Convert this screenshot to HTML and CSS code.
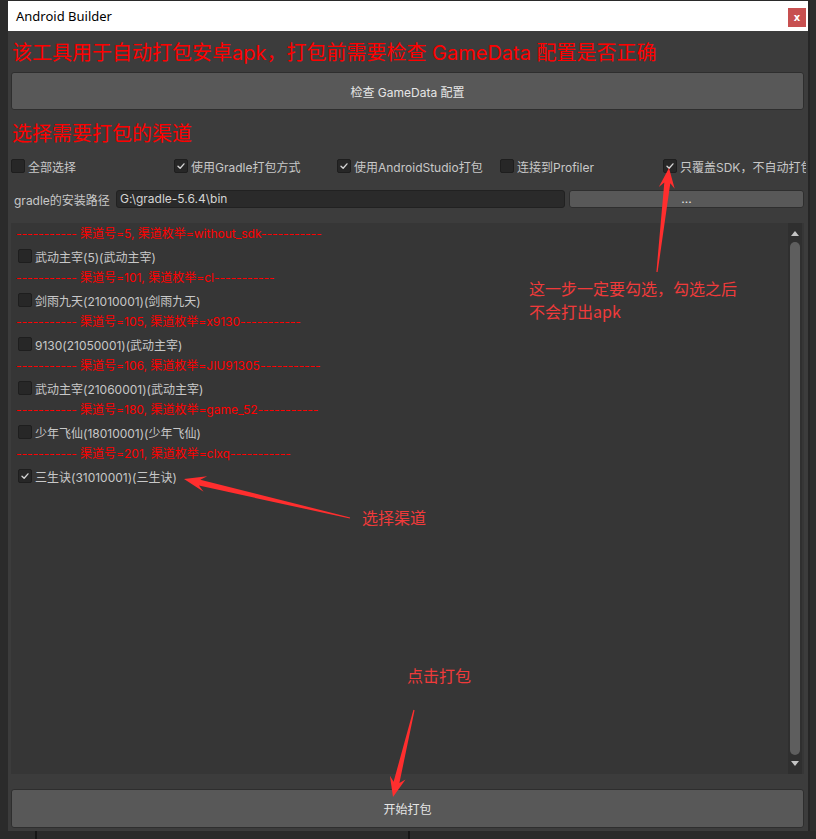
FILE: index.html
```html
<!DOCTYPE html>
<html>
<head>
<meta charset="utf-8">
<title>Android Builder</title>
<link rel="stylesheet" href="styles.css">
</head>
<body>
<div class="screen">
  <div class="gutter-l"></div>
  <div class="window">
    <div class="titlebar">
      <span class="title">Android Builder</span>
      <span class="close">x</span>
    </div>
    <div class="content">
      <div class="h1">该工具用于自动打包安卓apk，打包前需要检查 GameData 配置是否正确</div>
      <div class="btn btn-check">检查 GameData 配置</div>
      <div class="h2">选择需要打包的渠道</div>
      <div class="options">
        <div class="opt"><span class="cb"></span>全部选择</div>
        <div class="opt"><span class="cb on"><svg viewBox="0 0 14 14"><polyline points="3.5,7.2 6,9.6 10.5,4.5"/></svg></span>使用Gradle打包方式</div>
        <div class="opt"><span class="cb on"><svg viewBox="0 0 14 14"><polyline points="3.5,7.2 6,9.6 10.5,4.5"/></svg></span>使用AndroidStudio打包</div>
        <div class="opt"><span class="cb"></span>连接到Profiler</div>
        <div class="opt"><span class="cb on"><svg viewBox="0 0 14 14"><polyline points="3.5,7.2 6,9.6 10.5,4.5"/></svg></span>只覆盖SDK，不自动打包</div>
      </div>
      <div class="gradle-row">
        <span class="glabel">gradle的安装路径</span>
        <div class="field">G:\gradle-5.6.4\bin</div>
        <div class="btn btn-browse">...</div>
      </div>
      <div class="list">
        <div class="rows">
          <div class="sep">----------- 渠道号=5, 渠道枚举=without_sdk-----------</div>
          <div class="item"><span class="cb"></span>武动主宰(5)(武动主宰)</div>
          <div class="sep">----------- 渠道号=101, 渠道枚举=cl-----------</div>
          <div class="item"><span class="cb"></span>剑雨九天(21010001)(剑雨九天)</div>
          <div class="sep">----------- 渠道号=105, 渠道枚举=x9130-----------</div>
          <div class="item"><span class="cb"></span>9130(21050001)(武动主宰)</div>
          <div class="sep">----------- 渠道号=106, 渠道枚举=JIU91305-----------</div>
          <div class="item"><span class="cb"></span>武动主宰(21060001)(武动主宰)</div>
          <div class="sep">----------- 渠道号=180, 渠道枚举=game_52-----------</div>
          <div class="item"><span class="cb"></span>少年飞仙(18010001)(少年飞仙)</div>
          <div class="sep">----------- 渠道号=201, 渠道枚举=clxq-----------</div>
          <div class="item"><span class="cb on"><svg viewBox="0 0 14 14"><polyline points="3.5,7.2 6,9.6 10.5,4.5"/></svg></span>三生诀(31010001)(三生诀)</div>
        </div>
        <div class="scrollbar">
          <span class="arrow-up"></span>
          <span class="thumb"></span>
          <span class="arrow-down"></span>
        </div>
      </div>
      <div class="btn btn-build">开始打包</div>
    </div>
  </div>
  <div class="gutter-r"></div>
</div>
<div class="footer">
  <div class="f1"></div>
  <div class="f2"></div>
  <div class="f3"></div>
</div>

<div class="annotations">
  <svg class="arrows" width="816" height="839" viewBox="0 0 816 839">
    <polygon points="656.4,271.9 664.3,182.6 658.8,187.0 669,168 674.7,188.8 670.3,183.2 657.6,272.1"/>
    <polygon points="350.14,517.42 200.3,479.8 207.2,476.2 184,479 203.6,491.8 198.9,485.6 349.86,518.58"/>
    <polygon points="414.58,710.14 399.4,783.1 405.5,779.5 393,797 389.9,775.7 393.6,781.7 413.42,709.86"/>
  </svg>
  <div class="note note-sdk">这一步一定要勾选，勾选之后<br>不会打出apk</div>
  <div class="note note-channel">选择渠道</div>
  <div class="note note-build">点击打包</div>
</div>
</body>
</html>
```

FILE: styles.css
```css
* { box-sizing: border-box; }
html, body { margin: 0; padding: 0; }
body {
  width: 816px;
  height: 839px;
  overflow: hidden;
  background: #2a2a2a;
  font-family: Inter, "Noto Sans CJK SC", sans-serif;
  font-feature-settings: "calt" 0;
  position: relative;
}

.screen { display: flex; height: 831px; }
.gutter-l { width: 8px; background: #2b2b2b; }
.gutter-r { width: 8px; background: #2e2e2e; border-left: 2px solid #262626; }

.window {
  width: 800px;
  height: 830px;
  margin-top: 1px;
  display: flex;
  flex-direction: column;
  background: #3c3c3c;
  overflow: hidden;
}

.titlebar {
  height: 30px;
  flex: none;
  background: #ffffff;
  display: flex;
  justify-content: space-between;
  padding: 0 2px 0 8px;
}
.title {
  font-family: "Noto Sans", sans-serif;
  font-size: 13px;
  color: #000;
  line-height: 30px;
}
.close {
  margin-top: 7px;
  width: 18px;
  height: 19px;
  background: #c75050;
  color: #fff;
  font-family: "DejaVu Sans", sans-serif;
  font-size: 10px;
  font-weight: bold;
  display: flex;
  align-items: center;
  justify-content: center;
}

.content {
  flex: 1;
  display: flex;
  flex-direction: column;
  padding: 0 4px 3px 3px;
}

.h1, .h2 {
  font-size: 20px;
  line-height: 24px;
  color: #ff0000;
  white-space: nowrap;
  padding-left: 1px;
}
.h1 { padding-top: 10px; padding-bottom: 7px; }
.h2 { padding-top: 12px; padding-bottom: 11px; }

.btn {
  background: #585858;
  border: 1px solid #2e2e2e;
  border-radius: 3px;
  color: #e6e6e6;
  font-size: 12px;
  display: flex;
  align-items: center;
  justify-content: center;
}
.btn-check { height: 38px; flex: none; }
.btn-build { height: 39px; margin-top: 15px; flex: none; }

.options {
  display: grid;
  grid-template-columns: repeat(5, 163px);
  height: 18px;
  width: 795px;
  align-items: center;
  overflow: hidden;
  flex: none;
}
.opt {
  display: flex;
  align-items: center;
  gap: 3px;
  font-size: 12px;
  color: #c8c8c8;
  white-space: nowrap;
}

.cb {
  width: 14px;
  height: 14px;
  flex: none;
  background: #272727;
  border: 1px solid #1e1e1e;
  border-radius: 2px;
  display: flex;
  align-items: center;
  justify-content: center;
}
.cb svg { width: 14px; height: 14px; }
.cb polyline {
  fill: none;
  stroke: #d4d4d4;
  stroke-width: 1.6;
  stroke-linecap: round;
  stroke-linejoin: round;
}

.gradle-row {
  margin-top: 15px;
  height: 18px;
  display: flex;
  align-items: center;
  flex: none;
}
.glabel {
  width: 105px;
  padding-left: 3px;
  font-size: 12px;
  color: #c8c8c8;
  white-space: nowrap;
}
.field {
  width: 449px;
  height: 18px;
  background: #2a2a2a;
  border: 1px solid #212121;
  border-radius: 3px;
  font-size: 12px;
  line-height: 16px;
  color: #d4d4d4;
  padding-left: 3px;
}
.btn-browse {
  margin-left: 4px;
  flex: 1;
  height: 18px;
  align-items: flex-end;
  padding-bottom: 3px;
  line-height: 10px;
}

.list {
  margin-top: 15px;
  height: 551px;
  flex: none;
  background: #363636;
  display: flex;
}
.rows { flex: 1; padding-left: 5px; }
.sep {
  height: 22px;
  line-height: 22px;
  font-size: 12px;
  color: #ff0000;
  white-space: nowrap;
}
.item {
  height: 22px;
  display: flex;
  align-items: center;
  gap: 3px;
  padding-left: 2px;
  font-size: 12px;
  color: #c8c8c8;
  white-space: nowrap;
}

.scrollbar {
  width: 14px;
  margin-right: 2px;
  background: #2f2f2f;
  display: flex;
  flex-direction: column;
  align-items: center;
}
.arrow-up {
  margin-top: 8px;
  width: 0; height: 0;
  border-left: 4px solid transparent;
  border-right: 4px solid transparent;
  border-bottom: 5px solid #c4c4c4;
}
.thumb {
  margin-top: 6px;
  width: 10px;
  height: 513px;
  background: #5e5e5e;
  border-radius: 5px;
}
.arrow-down {
  margin-top: 6px;
  width: 0; height: 0;
  border-left: 4px solid transparent;
  border-right: 4px solid transparent;
  border-top: 5px solid #c4c4c4;
}

.footer { display: flex; height: 8px; background: #2a2a2a; }
.f1 { width: 35px; }
.f2 { width: 373px; border-left: 2px solid #151515; }
.f3 { flex: 1; border-left: 2px solid #151515; }

.annotations {
  position: absolute;
  left: 0; top: 0;
  width: 816px; height: 839px;
  pointer-events: none;
}
.arrows { position: absolute; left: 0; top: 0; }
.arrows polygon { fill: #ff2e2e; }
.note {
  position: absolute;
  font-family: "Noto Sans CJK SC", sans-serif;
  font-size: 16px;
  line-height: 23px;
  color: #f03a3a;
  white-space: nowrap;
}
.note-sdk { left: 529px; top: 277px; }
.note-channel { left: 362px; top: 506px; }
.note-build { left: 407px; top: 664px; }
```
